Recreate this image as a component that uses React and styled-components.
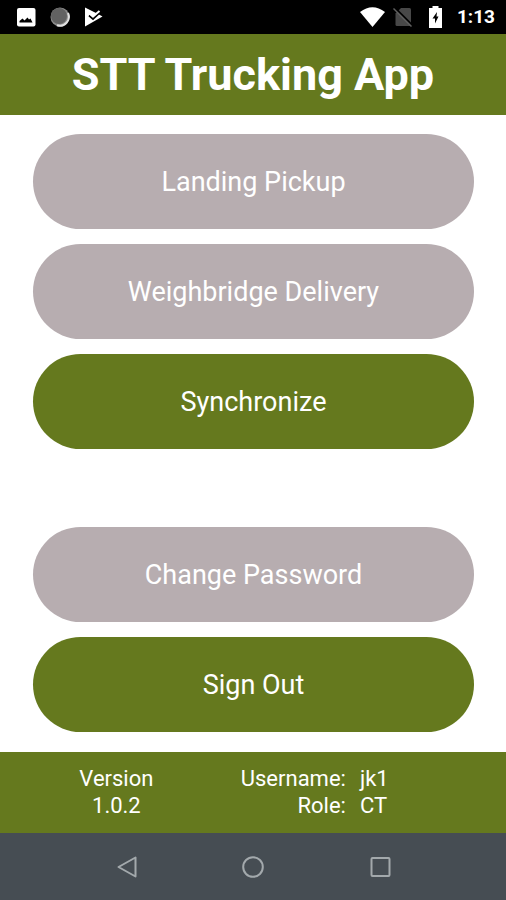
import React, { Component } from 'react'
import styled, { createGlobalStyle } from 'styled-components';

const GREEN = '#65791e';
const GREY = '#b7adb0';

const GlobalStyle = createGlobalStyle`
body {
    margin: 0;
    background: #fff;
    font-family: Roboto, "Noto Sans", sans-serif;
}
`

const Wrapper = styled.div`
display: flex;
flex-direction: column;
min-height: 100vh;
`

const StatusBar = styled.div`
display: flex;
justify-content: space-between;
align-items: center;
height: 34px;
padding: 0 11px 0 16px;
box-sizing: border-box;
background: #000;
color: #fff;
`

const StatusGroup = styled.div`
display: flex;
align-items: center;
gap: ${props => props.$gap};
`

const Clock = styled.time`
font-size: 19px;
line-height: 24px;
font-weight: 700;
`

const Header = styled.header`
padding: 12px 0;
background: ${GREEN};
`

const Title = styled.h1`
margin: 0;
color: #fff;
font-size: 45px;
line-height: 57px;
font-weight: 700;
text-align: center;
`

const Menu = styled.main`
flex: 1;
display: flex;
flex-direction: column;
justify-content: space-between;
padding: 19px 32px 20px 33px;
`

const ButtonGroup = styled.div`
display: flex;
flex-direction: column;
gap: 15px;
`

const MenuButton = styled.button`
height: 95px;
border: 0;
border-radius: 48px;
background: ${props => props.$active ? GREEN : GREY};
color: #fff;
font-family: inherit;
font-size: 27px;
cursor: pointer;
`

const Footer = styled.footer`
display: flex;
padding: 13px 0 14px;
background: ${GREEN};
color: #fff;
font-size: 22px;
line-height: 27px;
`

const Version = styled.div`
width: 46%;
display: flex;
flex-direction: column;
align-items: center;
`

const Account = styled.dl`
display: grid;
grid-template-columns: auto auto;
column-gap: 14px;
margin: 0 0 0 8px;
`

const AccountLabel = styled.dt`
text-align: right;
`

const AccountValue = styled.dd`
margin: 0;
`

const NavBar = styled.nav`
display: grid;
grid-template-columns: repeat(3, 1fr);
height: 67px;
padding: 0 12.5%;
background: #464d53;
`

const NavButton = styled.button`
display: flex;
justify-content: center;
align-items: center;
padding: 0;
border: 0;
background: none;
color: #a3a9ac;
cursor: pointer;
`

const ImageIcon = () => (
    <svg width="20" height="20" viewBox="0 0 20 20">
        <rect x="1" y="1" width="18.500" height="18.500" rx="2" fill="#fff" />
        <path d="M3.500 15.500V14L6.500 11.500 8.500 13.500 11.500 10.500 13 12.500 14.500 11.500 16.500 15.500z" fill="#000" />
    </svg>
)

const MoonIcon = () => (
    <svg width="20" height="20" viewBox="0 0 20 20">
        <circle cx="10" cy="10" r="9.500" fill="#8c8c8c" />
        <path d="M18 6A9 9 0 0 1 7 18.300" fill="none" stroke="#e0e0e0" strokeWidth="2" />
        <circle cx="9" cy="9" r="8" fill="#626262" />
    </svg>
)

const PlayCheckIcon = () => (
    <svg width="20" height="20" viewBox="0 0 20 20">
        <path d="M1 .5 14 7 18.500 9.500 1 19.500z" fill="#fff" />
        <path d="M5 8.500 9 12 17 4.500" fill="none" stroke="#000" strokeWidth="1.800" />
        <path d="M5.500 6.500 9 9.500 15.500 4" fill="none" stroke="#fff" strokeWidth="2" />
    </svg>
)

const WifiIcon = () => (
    <svg width="26" height="20" viewBox="0 0 26 20">
        <path d="M0 5Q12.500-4.500 25 5L12.500 20z" fill="#fff" />
    </svg>
)

const NoSimIcon = () => (
    <svg width="20" height="20" viewBox="0 0 20 20">
        <path d="M8 1H16.500Q18 1 18 2.500V19H4Q2.500 19 2.500 17.500V6.500z" fill="#484848" />
        <path d="M2 1 19.500 18.500" stroke="#000" strokeWidth="2" />
        <path d="M.5 1.500 18.500 19.500" stroke="#606060" strokeWidth="1.500" />
    </svg>
)

const BatteryIcon = () => (
    <svg width="30" height="22" viewBox="0 0 30 22">
        <path d="M12.500 0h6v2h3.500v20H9V2h3.500z" fill="#fff" />
        <path d="M17 6 12.500 12.500h2.500V17.500l3.500-7h-2z" fill="#000" />
    </svg>
)

const BackIcon = () => (
    <svg width="24" height="24" viewBox="0 0 24 24" fill="none" stroke="currentColor" strokeWidth="2" strokeLinejoin="round">
        <path d="M3.500 12 20.500 2.500V21.500z" />
    </svg>
)

const HomeIcon = () => (
    <svg width="24" height="24" viewBox="0 0 24 24" fill="none" stroke="currentColor" strokeWidth="2">
        <circle cx="12" cy="12" r="9.800" />
    </svg>
)

const RecentIcon = () => (
    <svg width="24" height="24" viewBox="0 0 24 24" fill="none" stroke="currentColor" strokeWidth="2">
        <rect x="3.500" y="3" width="18" height="18" rx="1" />
    </svg>
)

const jobButtons = [
    { label: 'Landing Pickup' },
    { label: 'Weighbridge Delivery' },
    { label: 'Synchronize', active: true }
];

const accountButtons = [
    { label: 'Change Password' },
    { label: 'Sign Out', active: true }
];

class App extends Component {

    renderButtons = (buttons) => (
        <ButtonGroup>
            {buttons.map(button => (
                <MenuButton key={button.label} type="button" $active={button.active}>{button.label}</MenuButton>
            ))}
        </ButtonGroup>
    )

    render() {
        return (
            <Wrapper>
                <GlobalStyle />
                <StatusBar>
                    <StatusGroup $gap="14px">
                        <ImageIcon />
                        <MoonIcon />
                        <PlayCheckIcon />
                    </StatusGroup>
                    <StatusGroup $gap="7px">
                        <WifiIcon />
                        <NoSimIcon />
                        <BatteryIcon />
                        <Clock>1:13</Clock>
                    </StatusGroup>
                </StatusBar>
                <Header>
                    <Title>STT Trucking App</Title>
                </Header>
                <Menu>
                    {this.renderButtons(jobButtons)}
                    {this.renderButtons(accountButtons)}
                </Menu>
                <Footer>
                    <Version>
                        <span>Version</span>
                        <span>1.0.2</span>
                    </Version>
                    <Account>
                        <AccountLabel>Username:</AccountLabel>
                        <AccountValue>jk1</AccountValue>
                        <AccountLabel>Role:</AccountLabel>
                        <AccountValue>CT</AccountValue>
                    </Account>
                </Footer>
                <NavBar>
                    <NavButton type="button" aria-label="Back"><BackIcon /></NavButton>
                    <NavButton type="button" aria-label="Home"><HomeIcon /></NavButton>
                    <NavButton type="button" aria-label="Recent apps"><RecentIcon /></NavButton>
                </NavBar>
            </Wrapper>
        );
    }
}

export default App;
